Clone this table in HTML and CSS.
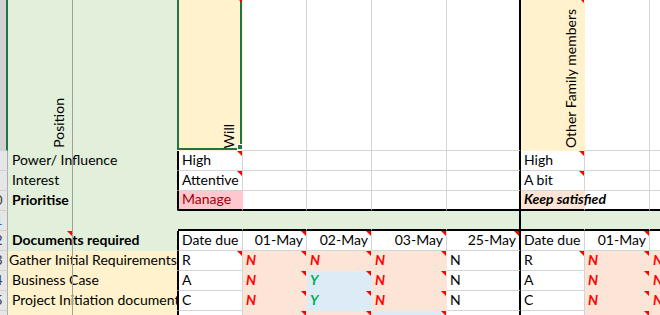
FILE: index.html
```html
<!DOCTYPE html>
<html>
<head>
<meta charset="utf-8">
<link rel="stylesheet" href="styles.css">
</head>
<body>
<div class="sheet">
  <!-- row 7 -->
  <div class="rh sel"></div>
  <div class="c g top"><span class="vt">Position</span></div>
  <div class="c g top"></div>
  <div class="c yl top cm act"><span class="vt">Will</span><i class="selbox"><b class="handle"></b></i></div>
  <div class="c top"></div>
  <div class="c top"></div>
  <div class="c top"></div>
  <div class="c top bR"></div>
  <div class="c yl top cm"><span class="vt">Other Family members</span></div>
  <div class="c top"></div>
  <div class="c top last"></div>

  <!-- row 8 -->
  <div class="rh"></div>
  <div class="c g ab edge">Power/ Influence</div>
  <div class="c bL cm">High</div>
  <div class="c"></div>
  <div class="c"></div>
  <div class="c"></div>
  <div class="c bR"></div>
  <div class="c cm">High</div>
  <div class="c"></div>
  <div class="c last"></div>

  <!-- row 9 -->
  <div class="rh"></div>
  <div class="c g ab edge">Interest</div>
  <div class="c bL cm">Attentive</div>
  <div class="c"></div>
  <div class="c"></div>
  <div class="c"></div>
  <div class="c bR"></div>
  <div class="c cm">A bit</div>
  <div class="c"></div>
  <div class="c last"></div>

  <!-- row 10 -->
  <div class="rh"><span>10</span></div>
  <div class="c g ab edge b">Prioritise</div>
  <div class="c bL bad bB">Manage</div>
  <div class="c bB"></div>
  <div class="c bB"></div>
  <div class="c bB"></div>
  <div class="c bB bR"></div>
  <div class="c pe bB over b i">Keep satisfied</div>
  <div class="c bB"></div>
  <div class="c bB last"></div>

  <!-- row 11 -->
  <div class="rh blue"><span>11</span></div>
  <div class="c g ab"></div>
  <div class="c g bB"></div>
  <div class="c g bB"></div>
  <div class="c g bB"></div>
  <div class="c g bB"></div>
  <div class="c g bB bR"></div>
  <div class="c g bB"></div>
  <div class="c g bB"></div>
  <div class="c g bB last"></div>

  <!-- row 12 -->
  <div class="rh"><span>12</span></div>
  <div class="c g ab edge b">Documents required<i class="cmA"></i></div>
  <div class="c bL">Date due</div>
  <div class="c r cm">01-May</div>
  <div class="c r cm">02-May</div>
  <div class="c r cm">03-May</div>
  <div class="c r cm bR">25-May</div>
  <div class="c">Date due</div>
  <div class="c r cm">01-May</div>
  <div class="c last"></div>

  <!-- row 13 -->
  <div class="rh"><span>13</span></div>
  <div class="c yl ab edge first">Gather Initial Requirements</div>
  <div class="c bL cm">R</div>
  <div class="c pe cm n">N</div>
  <div class="c pe cm n">N</div>
  <div class="c pe cm n">N</div>
  <div class="c bR">N</div>
  <div class="c cm">R</div>
  <div class="c pe cm n">N</div>
  <div class="c pe n last">N</div>

  <!-- row 14 -->
  <div class="rh"><span>14</span></div>
  <div class="c yl ab edge">Business Case</div>
  <div class="c bL">A</div>
  <div class="c pe cm n">N</div>
  <div class="c bl cm y">Y</div>
  <div class="c pe cm n">N</div>
  <div class="c bR">N</div>
  <div class="c">A</div>
  <div class="c pe cm n">N</div>
  <div class="c pe n last">N</div>

  <!-- row 15 -->
  <div class="rh"><span>15</span></div>
  <div class="c yl ab edge">Project Initiation document</div>
  <div class="c bL">C</div>
  <div class="c pe cm n">N</div>
  <div class="c bl cm y">Y</div>
  <div class="c pe cm n">N</div>
  <div class="c bR">N</div>
  <div class="c">C</div>
  <div class="c pe cm n">N</div>
  <div class="c pe n last">N</div>

  <!-- row 16 -->
  <div class="rh"></div>
  <div class="c yl ab edge"></div>
  <div class="c bL"></div>
  <div class="c pe cm"></div>
  <div class="c pe cm"></div>
  <div class="c bl cm"></div>
  <div class="c bR"></div>
  <div class="c"></div>
  <div class="c pe cm"></div>
  <div class="c pe last"></div>

  <i class="freeze"></i>
</div>
</body>
</html>
```
FILE: styles.css
```css
* {
  box-sizing: border-box;
  margin: 0;
  padding: 0;
}

html, body {
  width: 660px;
  height: 315px;
  overflow: hidden;
  background: #ffffff;
}

body {
  font-family: Lato, "Liberation Sans", sans-serif;
  font-size: 14px;
  color: #000000;
}

.sheet {
  position: relative;
  display: grid;
  grid-template-columns: 8px 65px 105px 65px 64px 65px 75px 74px 64px 65px 10px;
  grid-template-rows: 153px repeat(9, 20px);
  width: 660px;
  margin-top: -2px;
}

/* row headers */
.rh {
  display: flex;
  justify-content: flex-end;
  align-items: flex-end;
  overflow: hidden;
  background: #e6e6e6;
  border-right: 1px solid #ababab;
  border-bottom: 1px solid #d0d0d0;
  color: #444444;
  line-height: 17px;
  padding-bottom: 2px;
}
.rh span {
  flex: 0 0 25px;
  text-align: center;
}
.rh.sel {
  background: #d2d2d2;
  border-right: 2px solid #217346;
}
.rh.blue {
  color: #2f6fb6;
}

/* cells */
.c {
  position: relative;
  display: flex;
  align-items: flex-end;
  white-space: nowrap;
  line-height: 17px;
  padding: 0 3px 2px 3px;
  border-right: 1px solid #d4d4d4;
  border-bottom: 1px solid #d4d4d4;
}
.c.top {
  justify-content: flex-end;
  padding: 0 5px 2px 0;
}
.c.last {
  border-right: none;
  overflow: hidden;
}
.ab {
  grid-column: span 2;
  overflow: hidden;
  padding-left: 4px;
}
.ab.first {
  padding-left: 1px;
}
.ab.edge {
  border-right-color: #000000;
}
.r {
  justify-content: flex-end;
}
.b { font-weight: bold; }
.i { font-style: italic; }

/* fills (hide gridlines) */
.g  { background: #e2efda; border-color: #e2efda; }
.yl { background: #fff2cc; border-color: #fff2cc; }
.pe { background: #fce4d6; border-color: #fce4d6; }
.bl { background: #ddebf7; border-color: #ddebf7; }
.bad {
  background: #ffc7ce;
  border-right-color: #ffc7ce;
  color: #9c0006;
}

/* black borders */
.bL { border-left: 1px solid #000000; }
.bR { border-right: 2px solid #000000; }
.bB { border-bottom: 2px solid #000000; }

/* text overflowing into neighbour */
.over {
  overflow: visible;
  z-index: 1;
}

/* Y / N flags */
.n, .y {
  font-weight: bold;
  font-style: italic;
}
.n { color: #ff0000; }
.y { color: #00b050; }

/* comment indicators */
.cm::after,
.cmA {
  content: "";
  position: absolute;
  top: 0;
  right: 0;
  width: 0;
  height: 0;
  border-top: 5px solid #ff0000;
  border-left: 5px solid transparent;
}
.cmA {
  right: auto;
  left: 59px;
}

/* rotated headers */
.vt {
  writing-mode: vertical-rl;
  transform: rotate(180deg);
  line-height: 17px;
}

/* active cell selection */
.act {
  z-index: 3;
}
.selbox {
  position: absolute;
  left: -1px;
  right: 0;
  top: -2px;
  bottom: 0;
  border: 2px solid #217346;
}
.handle {
  position: absolute;
  right: -3px;
  bottom: -2px;
  width: 6px;
  height: 6px;
  background: #217346;
  border: 1px solid #ffffff;
}

/* frozen pane divider */
.freeze {
  position: absolute;
  left: 72px;
  top: 0;
  bottom: 0;
  width: 1px;
  background: #a0a0a0;
  z-index: 4;
}
```
